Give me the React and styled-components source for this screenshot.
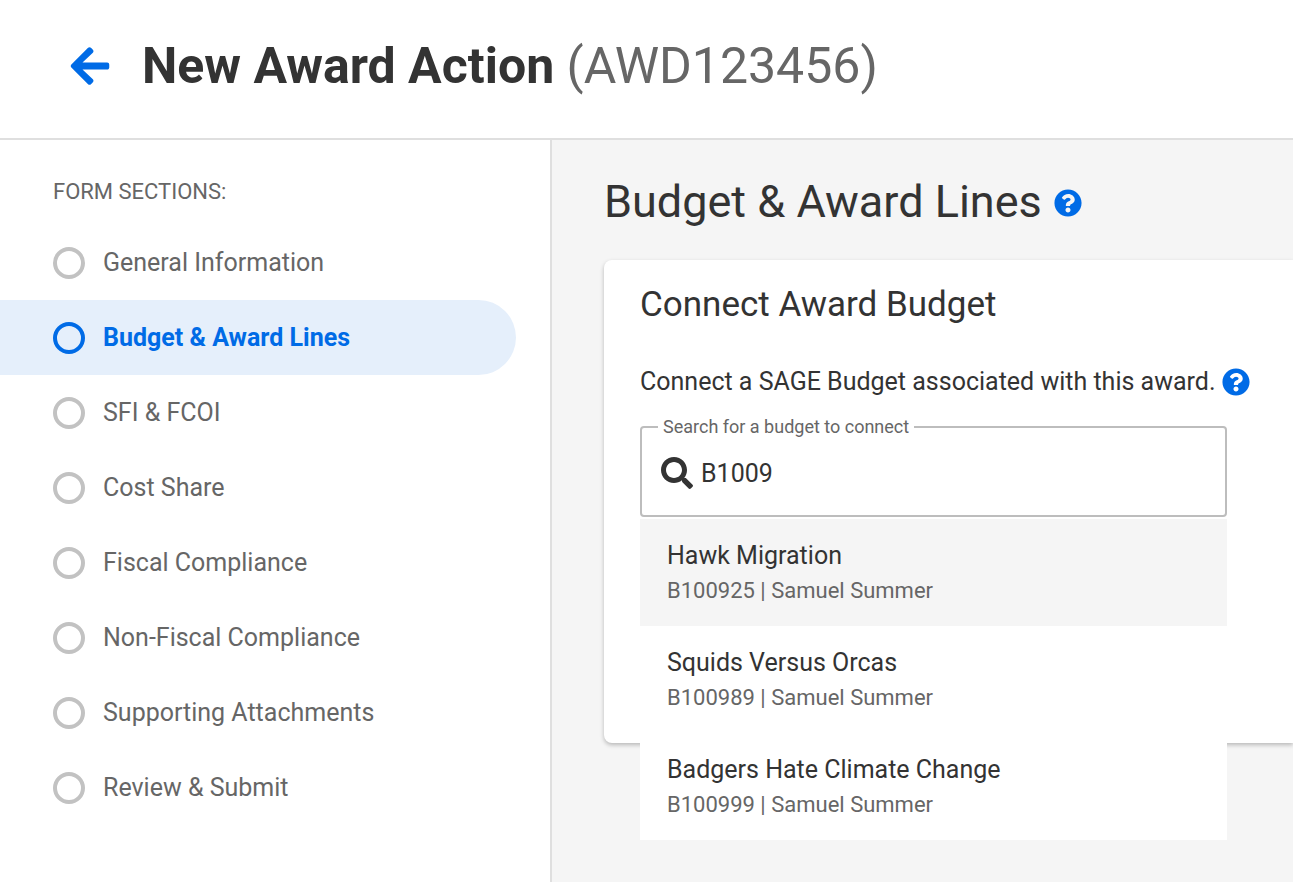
import React, { useState } from "react"
import styled, { createGlobalStyle } from "styled-components"
import { FaArrowLeft, FaQuestionCircle, FaSearch } from "react-icons/fa"

const GlobalStyle = createGlobalStyle`
  *, *::before {
    box-sizing: border-box;
  }
  body {
    margin: 0;
    background: #fff;
    color: #333;
    font-family: Roboto, "Liberation Sans", sans-serif;
  }
  h1, h2, h3, p, ul {
    margin: 0;
    padding: 0;
  }
  button {
    padding: 0;
    border: 0;
    background: none;
    font-family: inherit;
    cursor: pointer;
  }
`

const Page = styled.div`
  min-height: 100vh;
  display: flex;
  flex-direction: column;
  overflow-x: hidden;
`
const Header = styled.header`
  display: flex;
  align-items: center;
  gap: 30px;
  padding: 34px 68px 40px;
  border-bottom: 2px solid #dfdfdf;
`
const BackLink = styled.a`
  display: flex;
  color: #006be6;
`
const Title = styled.h1`
  font-size: 50px;
  line-height: 64px;
  font-weight: 700;

  span {
    color: #666;
    font-weight: 400;
  }
`
const Body = styled.div`
  flex: 1;
  display: flex;
`
const Sidebar = styled.nav`
  flex: 0 0 552px;
  padding: 36px 34px 36px 0;
  border-right: 2px solid #dfdfdf;
`
const SidebarLabel = styled.p`
  padding-left: 53px;
  margin-bottom: 17px;
  color: #666;
  font-size: 22px;
  line-height: 32px;
`
const SectionList = styled.ul`
  list-style: none;
`
const SectionLink = styled.a`
  display: flex;
  align-items: center;
  gap: 18px;
  height: 75px;
  padding-left: 53px;
  border-radius: 0 38px 38px 0;
  background: ${props => (props.$active ? "#e5effb" : "none")};
  color: ${props => (props.$active ? "#006be6" : "#666")};
  font-size: 25px;
  font-weight: ${props => (props.$active ? 700 : 400)};
  text-decoration: none;

  /* status circle */
  &::before {
    content: "";
    width: 32px;
    height: 32px;
    border: 4px solid ${props => (props.$active ? "#006be6" : "#c2c2c2")};
    border-radius: 50%;
  }
`
const Main = styled.main`
  flex: 1;
  min-width: 0;
  padding: 32px 0 40px 52px;
  background: #f5f5f5;
`
const HeadingRow = styled.div`
  display: flex;
  align-items: baseline;
  gap: 12px;
  margin-bottom: 28px;
`
const PageHeading = styled.h2`
  font-size: 45px;
  line-height: 60px;
  font-weight: 400;
`
const HelpButton = styled.button`
  display: flex;
  color: #006be6;
`
const Card = styled.section`
  min-height: 483px;
  padding: 25px 36px;
  border-radius: 8px 0 0 8px;
  background: #fff;
  box-shadow: 0 2px 4px rgba(0, 0, 0, 0.25);
`
const CardHeading = styled.h3`
  margin-bottom: 37px;
  font-size: 35px;
  line-height: 40px;
  font-weight: 400;
`
const Prompt = styled.div`
  display: flex;
  align-items: center;
  gap: 7px;
  margin-bottom: 13px;
  font-size: 25px;
  line-height: 40px;
  white-space: nowrap;
`
const Combo = styled.div`
  position: relative;
  max-width: 587px;
`
const Field = styled.fieldset`
  display: flex;
  height: 102px;
  margin: 0;
  padding: 0 16px;
  border: 2px solid #bdbdbd;
  border-radius: 4px;
`
const FieldLegend = styled.legend`
  padding: 0 5px;
  color: #666;
  font-size: 18px;
  line-height: 24px;
`
const FieldRow = styled.div`
  flex: 1;
  display: flex;
  align-items: center;
  gap: 8px;
  padding: 0 3px 8px;
`
const SearchInput = styled.input`
  flex: 1;
  min-width: 0;
  padding: 0;
  border: 0;
  outline: 0;
  background: none;
  color: #333;
  font-family: inherit;
  font-size: 25px;
`
const Results = styled.ul`
  position: absolute;
  top: 100%;
  left: 0;
  right: 0;
  padding-top: 2px;
  background: #fff;
  list-style: none;
`
const Result = styled.button`
  display: block;
  width: 100%;
  height: 107px;
  padding: 0 27px;
  background: ${props => (props.$active ? "#f5f5f5" : "#fff")};
  color: #333;
  font-size: 25px;
  line-height: 36px;
  text-align: left;

  small {
    display: block;
    color: #666;
    font-size: 22px;
    line-height: 34px;
  }
`

const sections = [
  "General Information",
  "Budget & Award Lines",
  "SFI & FCOI",
  "Cost Share",
  "Fiscal Compliance",
  "Non-Fiscal Compliance",
  "Supporting Attachments",
  "Review & Submit",
]

const budgets = [
  { id: "B100925", name: "Hawk Migration", owner: "Samuel Summer" },
  { id: "B100989", name: "Squids Versus Orcas", owner: "Samuel Summer" },
  { id: "B100999", name: "Badgers Hate Climate Change", owner: "Samuel Summer" },
]

function App() {
  const [query, setQuery] = useState("B1009")
  const [section, setSection] = useState("Budget & Award Lines")

  return (
    <Page>
      <GlobalStyle />
      <Header>
        <BackLink href="#" aria-label="Back">
          <FaArrowLeft size={44} />
        </BackLink>
        <Title>
          New Award Action <span>(AWD123456)</span>
        </Title>
      </Header>
      <Body>
        <Sidebar>
          <SidebarLabel>FORM SECTIONS:</SidebarLabel>
          <SectionList>
            {sections.map(name => (
              <li key={name}>
                <SectionLink
                  href="#"
                  $active={name === section}
                  onClick={() => setSection(name)}
                >
                  {name}
                </SectionLink>
              </li>
            ))}
          </SectionList>
        </Sidebar>
        <Main>
          <HeadingRow>
            <PageHeading>Budget &amp; Award Lines</PageHeading>
            <HelpButton aria-label="Help with budget and award lines">
              <FaQuestionCircle size={28} />
            </HelpButton>
          </HeadingRow>
          <Card>
            <CardHeading>Connect Award Budget</CardHeading>
            <Prompt>
              <p>Connect a SAGE Budget associated with this award.</p>
              <HelpButton aria-label="Help with connecting a budget">
                <FaQuestionCircle size={28} />
              </HelpButton>
            </Prompt>
            <Combo>
              <Field>
                <FieldLegend>
                  <label htmlFor="budget">Search for a budget to connect</label>
                </FieldLegend>
                <FieldRow>
                  <FaSearch size={32} />
                  <SearchInput
                    id="budget"
                    value={query}
                    onChange={e => setQuery(e.target.value)}
                  />
                </FieldRow>
              </Field>
              <Results>
                {budgets.map((budget, i) => (
                  <li key={budget.id}>
                    <Result $active={i === 0}>
                      {budget.name}
                      <small>
                        {budget.id} | {budget.owner}
                      </small>
                    </Result>
                  </li>
                ))}
              </Results>
            </Combo>
          </Card>
        </Main>
      </Body>
    </Page>
  )
}

export default App
